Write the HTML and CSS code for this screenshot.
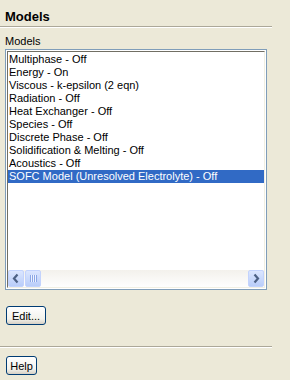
FILE: index.html
```html
<!DOCTYPE html>
<html>
<head>
    <meta charset="UTF-8">
    <title>Models</title>
    <link rel="stylesheet" href="styles.css">
</head>
<body>
<div class="panel">
    <h1 class="title">Models</h1>
    <div class="sep"></div>
    <div class="label">Models</div>
    <div class="list">
        <div class="list-inner">
            <ul class="items">
                <li>Multiphase - Off</li>
                <li>Energy - On</li>
                <li>Viscous - k-epsilon (2 eqn)</li>
                <li>Radiation - Off</li>
                <li>Heat Exchanger - Off</li>
                <li>Species - Off</li>
                <li>Discrete Phase - Off</li>
                <li>Solidification &amp; Melting - Off</li>
                <li>Acoustics - Off</li>
                <li class="selected">SOFC Model (Unresolved Electrolyte) - Off</li>
            </ul>
            <div class="hscroll">
                <span class="sbtn">
                    <svg width="16" height="17" viewBox="0 0 16 17"><path d="M9.5 4.5 L6 8.5 L9.5 12.5" fill="none" stroke="#4d6185" stroke-width="2.2"/></svg>
                </span>
                <span class="thumb">
                    <svg width="16" height="17" viewBox="0 0 16 17">
                        <path d="M5.5 5v7M7.5 5v7M9.5 5v7M11.5 5v7" stroke="#8ca7e6" stroke-width="1"/>
                        <path d="M6.5 5v7M8.5 5v7M10.5 5v7" stroke="#eef3ff" stroke-width="1"/>
                    </svg>
                </span>
                <span class="track"></span>
                <span class="sbtn">
                    <svg width="16" height="17" viewBox="0 0 16 17"><path d="M6.5 4.5 L10 8.5 L6.5 12.5" fill="none" stroke="#4d6185" stroke-width="2.2"/></svg>
                </span>
            </div>
        </div>
    </div>
    <button class="btn btn-edit">Edit...</button>
    <div class="sep sep-low"></div>
    <button class="btn btn-help">Help</button>
</div>
</body>
</html>
```

FILE: styles.css
```css
*{ margin: 0; padding: 0; }
li{ list-style: none; }
body{
    background: #ece9d8;
    font-family: "Liberation Sans", Arial, sans-serif;
    font-size: 11px;
    color: #000;
}
.panel{
    width: 272px;
    display: flex;
    flex-direction: column;
    align-items: flex-start;
}
.title{
    font-size: 13px;
    font-weight: bold;
    line-height: 16px;
    padding: 9px 5px 1px;
}
.sep{
    align-self: stretch;
    border-top: 1px solid #aca899;
    border-bottom: 1px solid #fff;
}
.label{
    line-height: 13px;
    margin: 7px 0 1px 5px;
}
.list{
    margin-left: 5px;
    width: 258px;
    height: 237px;
    border: 1px solid #7f9db9;
    padding: 1px;
    background: #fff;
    box-sizing: content-box;
}
.list-inner{
    height: 100%;
    box-sizing: border-box;
    border-top: 1px solid #716f64;
    border-left: 1px solid #716f64;
    border-right: 1px solid #f1efe2;
    border-bottom: 1px solid #f1efe2;
    display: flex;
    flex-direction: column;
}
.items{
    flex: 1;
    padding-top: 1px;
}
.items li{
    line-height: 13px;
    height: 13px;
    padding-left: 1px;
    white-space: nowrap;
}
.items li.selected{
    background: #316ac5;
    color: #fff;
}
.hscroll{
    height: 17px;
    display: flex;
    background: linear-gradient(#f3f1ec, #fefefe);
}
.sbtn, .thumb{
    width: 16px;
    height: 17px;
    box-sizing: border-box;
    border: 1px solid #c3d3fd;
    border-radius: 2px;
    background: linear-gradient(#dbe6ff, #b9cdf9);
    display: flex;
}
.thumb{
    margin-left: 1px;
}
.track{
    flex: 1;
}
.sbtn svg, .thumb svg{
    margin: -1px;
}
.btn{
    font-family: "Liberation Sans", Arial, sans-serif;
    font-size: 11px;
    height: 19px;
    margin-left: 6px;
    border: 1px solid #003c74;
    border-radius: 3px;
    background: linear-gradient(#ffffff, #f3f2ec 70%, #d6d0c5);
    color: #000;
}
.btn-edit{
    width: 40px;
    margin-top: 16px;
}
.btn-help{
    width: 31px;
    margin-top: 8px;
}
.sep-low{
    margin-top: 21px;
}
```
